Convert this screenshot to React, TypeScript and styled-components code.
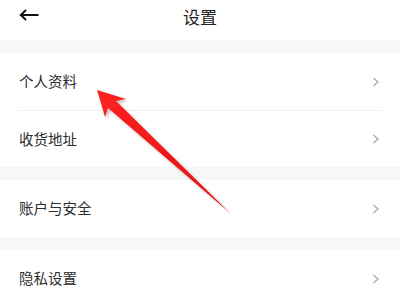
import React from "react";
import styled, { createGlobalStyle } from "styled-components";

const Global = createGlobalStyle`
  html, body { margin: 0; padding: 0; background: #fff; }
  body { font-family: "Noto Sans CJK SC", "Noto Sans", sans-serif; }
`;

const Page = styled.div`
  position: relative;
  width: 400px;
  height: 296px;
  overflow: hidden;
  background: #fff;
`;

const Header = styled.header`
  height: 40px;
  display: flex;
  align-items: center;
  justify-content: center;
  position: relative;
`;

const Back = styled.div`
  position: absolute;
  left: 19px;
  top: 9px;
  width: 20px;
  height: 12px;
  display: flex;
`;

const Title = styled.h1`
  margin: 0;
  margin-top: -8px;
  font-size: 17px;
  font-weight: 400;
  color: #222;
`;

const Gap = styled.div`
  height: 13px;
  background: #f7f7f7;
`;

const Group = styled.section`
  display: flex;
  flex-direction: column;
`;

const Row = styled.div<{ $h: number }>`
  height: ${(p) => p.$h}px;
  display: flex;
  align-items: center;
  justify-content: space-between;
  padding: 0 20px 0 19px;
`;

const Label = styled.span`
  font-size: 14.5px;
  color: #2e2e2e;
  line-height: 1;
`;

const Divider = styled.div`
  height: 1px;
  margin: 0 18px;
  background: #f0f0f0;
`;

const ArrowOverlay = styled.svg`
  position: absolute;
  left: 0;
  top: 0;
  pointer-events: none;
`;

const Chevron = () => (
  <svg width="8" height="10" viewBox="0 0 8 10">
    <polyline points="1.5,1 6,5 1.5,9" fill="none" stroke="#a8a8a8" strokeWidth="1.3" />
  </svg>
);

const Item = ({ label, h }: { label: string; h: number }) => (
  <Row $h={h}>
    <Label>{label}</Label>
    <Chevron />
  </Row>
);

export default function App() {
  return (
    <Page>
      <Global />
      <Header>
        <Back>
          <svg width="20" height="12" viewBox="0 0 20 12">
            <line x1="1.5" y1="6" x2="19.5" y2="6" stroke="#111" strokeWidth="2" />
            <polyline points="7,1 1.8,6 7,11" fill="none" stroke="#111" strokeWidth="2" />
          </svg>
        </Back>
        <Title>设置</Title>
      </Header>
      <Gap />
      <Group>
        <Item label="个人资料" h={57} />
        <Divider />
        <Item label="收货地址" h={56} />
      </Group>
      <Gap />
      <Group>
        <Item label="账户与安全" h={57} />
      </Group>
      <Gap />
      <Group>
        <Item label="隐私设置" h={57} />
      </Group>
      <ArrowOverlay width="400" height="296" viewBox="0 0 400 296">
        <defs>
          <filter id="sh" x="-20%" y="-20%" width="140%" height="140%">
            <feDropShadow dx="2" dy="2" stdDeviation="1.5" floodColor="#000" floodOpacity="0.25" />
          </filter>
          <linearGradient id="rg" x1="0" y1="0" x2="1" y2="1">
            <stop offset="0" stopColor="#ff2222" />
            <stop offset="1" stopColor="#e01010" />
          </linearGradient>
        </defs>
        <polygon
          points="97,90 126,99 116,101 230,213 108,108 105,117"
          fill="url(#rg)"
          filter="url(#sh)"
        />
      </ArrowOverlay>
    </Page>
  );
}
